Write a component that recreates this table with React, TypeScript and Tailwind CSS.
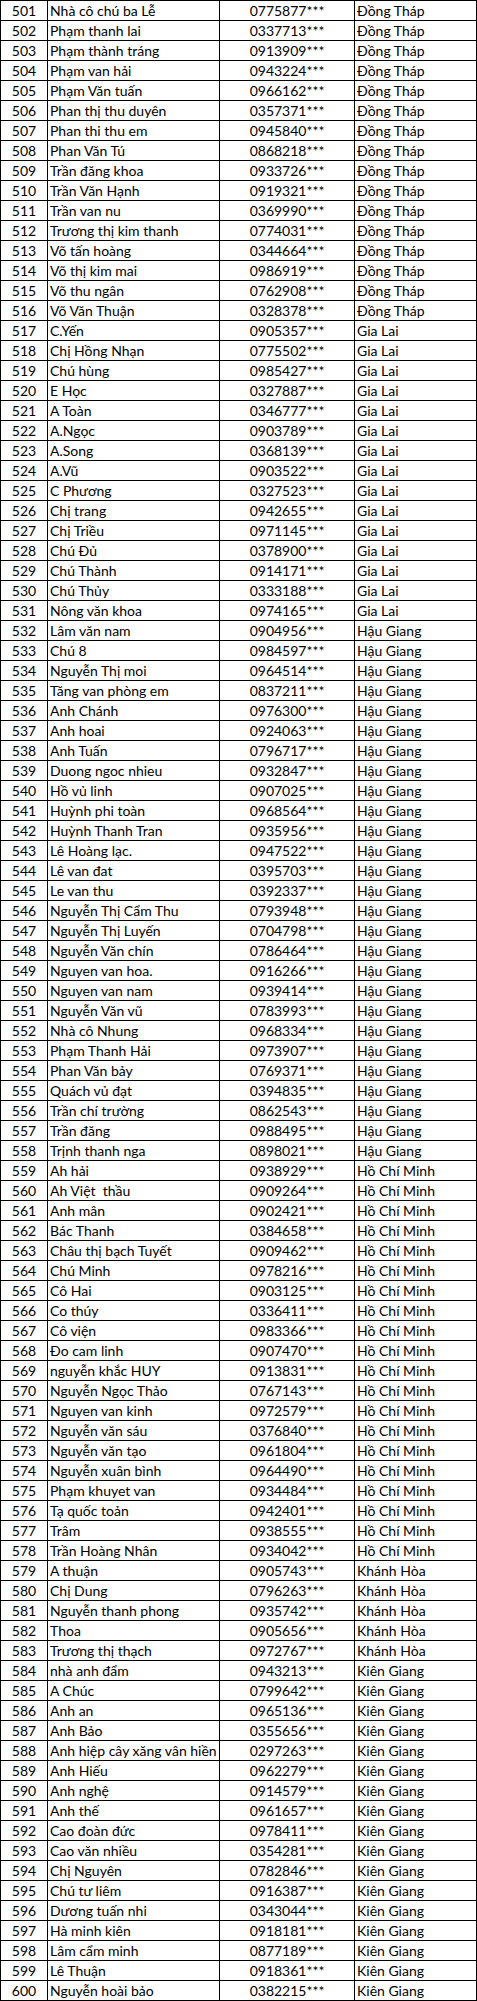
import React from 'react';

type Row = [string, string, string];

// name, phone prefix, province — numbering starts at 501
const rows: Row[] = [
  ['Nhà cô chú ba Lễ', '0775877', 'Đồng Tháp'],
  ['Phạm thanh lai', '0337713', 'Đồng Tháp'],
  ['Phạm thành tráng', '0913909', 'Đồng Tháp'],
  ['Phạm van hải', '0943224', 'Đồng Tháp'],
  ['Phạm Văn tuấn', '0966162', 'Đồng Tháp'],
  ['Phan thị thu duyên', '0357371', 'Đồng Tháp'],
  ['Phan thi thu em', '0945840', 'Đồng Tháp'],
  ['Phan Văn Tú', '0868218', 'Đồng Tháp'],
  ['Trần đăng khoa', '0933726', 'Đồng Tháp'],
  ['Trần Văn Hạnh', '0919321', 'Đồng Tháp'],
  ['Trần van nu', '0369990', 'Đồng Tháp'],
  ['Trương thị kim thanh', '0774031', 'Đồng Tháp'],
  ['Võ tấn hoàng', '0344664', 'Đồng Tháp'],
  ['Võ thị kim mai', '0986919', 'Đồng Tháp'],
  ['Võ thu ngân', '0762908', 'Đồng Tháp'],
  ['Võ Văn Thuận', '0328378', 'Đồng Tháp'],
  ['C.Yến', '0905357', 'Gia Lai'],
  ['Chị Hồng Nhạn', '0775502', 'Gia Lai'],
  ['Chú hùng', '0985427', 'Gia Lai'],
  ['E Học', '0327887', 'Gia Lai'],
  ['A Toàn', '0346777', 'Gia Lai'],
  ['A.Ngọc', '0903789', 'Gia Lai'],
  ['A.Song', '0368139', 'Gia Lai'],
  ['A.Vũ', '0903522', 'Gia Lai'],
  ['C Phương', '0327523', 'Gia Lai'],
  ['Chị trang', '0942655', 'Gia Lai'],
  ['Chị Triều', '0971145', 'Gia Lai'],
  ['Chú Đủ', '0378900', 'Gia Lai'],
  ['Chú Thành', '0914171', 'Gia Lai'],
  ['Chú Thủy', '0333188', 'Gia Lai'],
  ['Nông văn khoa', '0974165', 'Gia Lai'],
  ['Lâm văn nam', '0904956', 'Hậu Giang'],
  ['Chú 8', '0984597', 'Hậu Giang'],
  ['Nguyễn Thị moi', '0964514', 'Hậu Giang'],
  ['Tăng van phòng em', '0837211', 'Hậu Giang'],
  ['Anh Chánh', '0976300', 'Hậu Giang'],
  ['Anh hoai', '0924063', 'Hậu Giang'],
  ['Anh Tuấn', '0796717', 'Hậu Giang'],
  ['Duong ngoc nhieu', '0932847', 'Hậu Giang'],
  ['Hồ vủ linh', '0907025', 'Hậu Giang'],
  ['Huỳnh phi toàn', '0968564', 'Hậu Giang'],
  ['Huỳnh Thanh Tran', '0935956', 'Hậu Giang'],
  ['Lê Hoàng lạc.', '0947522', 'Hậu Giang'],
  ['Lê van đat', '0395703', 'Hậu Giang'],
  ['Le van thu', '0392337', 'Hậu Giang'],
  ['Nguyễn Thị Cẩm Thu', '0793948', 'Hậu Giang'],
  ['Nguyễn Thị Luyến', '0704798', 'Hậu Giang'],
  ['Nguyễn Văn chín', '0786464', 'Hậu Giang'],
  ['Nguyen van hoa.', '0916266', 'Hậu Giang'],
  ['Nguyen van nam', '0939414', 'Hậu Giang'],
  ['Nguyễn Văn vũ', '0783993', 'Hậu Giang'],
  ['Nhà cô Nhung', '0968334', 'Hậu Giang'],
  ['Phạm Thanh Hải', '0973907', 'Hậu Giang'],
  ['Phan Văn bảy', '0769371', 'Hậu Giang'],
  ['Quách vủ đạt', '0394835', 'Hậu Giang'],
  ['Trần chí trường', '0862543', 'Hậu Giang'],
  ['Trần đăng', '0988495', 'Hậu Giang'],
  ['Trịnh thanh nga', '0898021', 'Hậu Giang'],
  ['Ah hải', '0938929', 'Hồ Chí Minh'],
  ['Ah Việt  thầu', '0909264', 'Hồ Chí Minh'],
  ['Anh mân', '0902421', 'Hồ Chí Minh'],
  ['Bác Thanh', '0384658', 'Hồ Chí Minh'],
  ['Châu thị bạch Tuyết', '0909462', 'Hồ Chí Minh'],
  ['Chú Minh', '0978216', 'Hồ Chí Minh'],
  ['Cô Hai', '0903125', 'Hồ Chí Minh'],
  ['Co thúy', '0336411', 'Hồ Chí Minh'],
  ['Cô viện', '0983366', 'Hồ Chí Minh'],
  ['Đo cam linh', '0907470', 'Hồ Chí Minh'],
  ['nguyễn khắc HUY', '0913831', 'Hồ Chí Minh'],
  ['Nguyễn Ngọc Thảo', '0767143', 'Hồ Chí Minh'],
  ['Nguyen van kinh', '0972579', 'Hồ Chí Minh'],
  ['Nguyễn văn sáu', '0376840', 'Hồ Chí Minh'],
  ['Nguyễn văn tạo', '0961804', 'Hồ Chí Minh'],
  ['Nguyễn xuân bình', '0964490', 'Hồ Chí Minh'],
  ['Phạm khuyet van', '0934484', 'Hồ Chí Minh'],
  ['Tạ quốc toản', '0942401', 'Hồ Chí Minh'],
  ['Trâm', '0938555', 'Hồ Chí Minh'],
  ['Trần Hoàng Nhân', '0934042', 'Hồ Chí Minh'],
  ['A thuận', '0905743', 'Khánh Hòa'],
  ['Chị Dung', '0796263', 'Khánh Hòa'],
  ['Nguyễn thanh phong', '0935742', 'Khánh Hòa'],
  ['Thoa', '0905656', 'Khánh Hòa'],
  ['Trương thị thạch', '0972767', 'Khánh Hòa'],
  ['nhà anh đẩm', '0943213', 'Kiên Giang'],
  ['A Chúc', '0799642', 'Kiên Giang'],
  ['Anh an', '0965136', 'Kiên Giang'],
  ['Anh Bảo', '0355656', 'Kiên Giang'],
  ['Anh hiệp cây xăng vân hiền', '0297263', 'Kiên Giang'],
  ['Anh Hiếu', '0962279', 'Kiên Giang'],
  ['Anh nghệ', '0914579', 'Kiên Giang'],
  ['Anh thế', '0961657', 'Kiên Giang'],
  ['Cao đoàn đức', '0978411', 'Kiên Giang'],
  ['Cao văn nhiều', '0354281', 'Kiên Giang'],
  ['Chị Nguyên', '0782846', 'Kiên Giang'],
  ['Chú tư liêm', '0916387', 'Kiên Giang'],
  ['Dương tuấn nhi', '0343044', 'Kiên Giang'],
  ['Hà minh kiên', '0918181', 'Kiên Giang'],
  ['Lâm cẩm minh', '0877189', 'Kiên Giang'],
  ['Lê Thuận', '0918361', 'Kiên Giang'],
  ['Nguyễn hoài bảo', '0382215', 'Kiên Giang'],
];

const cell = 'border-r border-black h-[19px] leading-[19px] whitespace-pre overflow-hidden';

const App: React.FC = () => {
  return (
    <div className="w-[477px] bg-white text-black font-['Lato','Noto_Sans',sans-serif] text-[14px]">
      <div className="border-l border-t border-black">
        {rows.map(([name, phone, province], i) => (
          <div
            key={i}
            className="grid grid-cols-[47px_172px_135px_122px] border-b border-black"
          >
            <div className={`${cell} text-center`}>{501 + i}</div>
            <div className={`${cell} pl-[2px]`}>{name}</div>
            <div className={`${cell} text-center`}>{phone}***</div>
            <div className={`${cell} pl-[2px]`}>{province}</div>
          </div>
        ))}
      </div>
    </div>
  );
};

export default App;
